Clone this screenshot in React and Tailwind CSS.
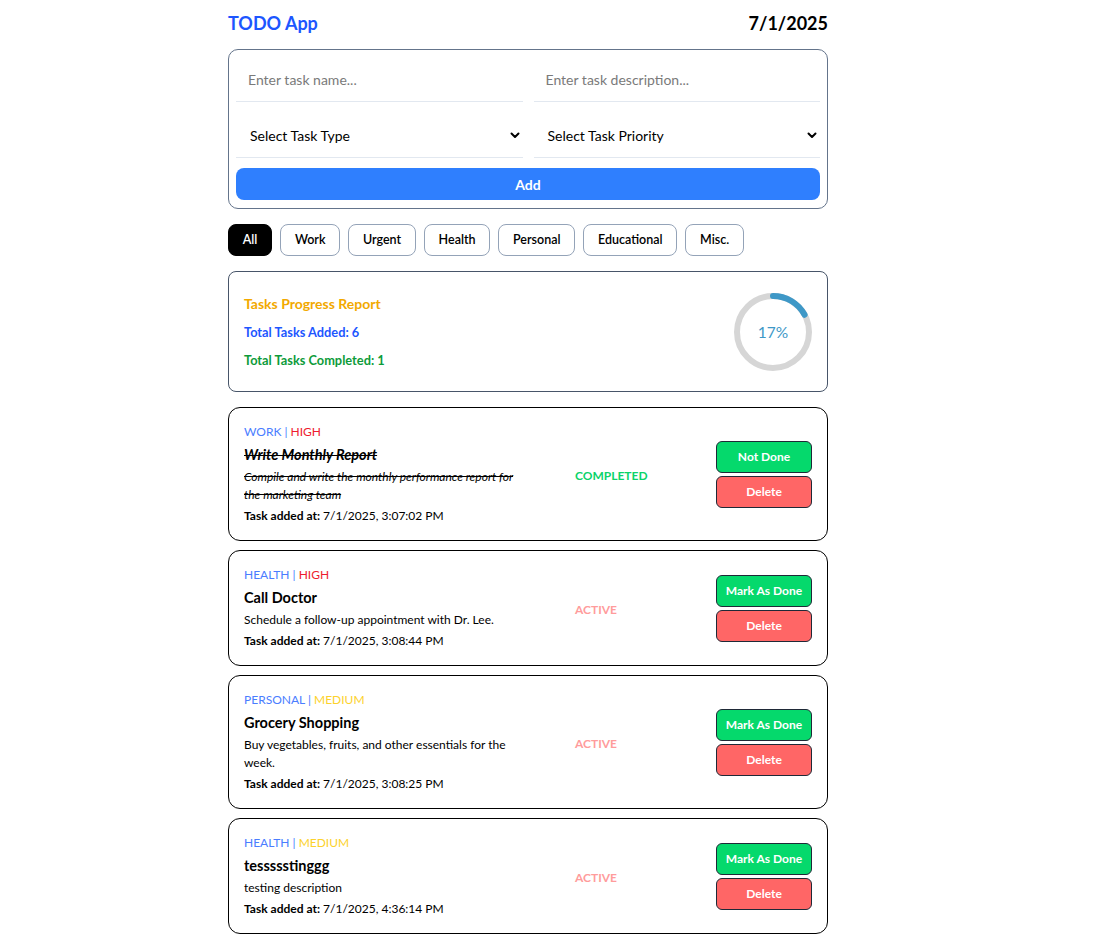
import { useState } from 'react';

const tasks = [
  {
    id: 1,
    type: 'WORK',
    priority: 'HIGH',
    title: 'Write Monthly Report',
    description: 'Compile and write the monthly performance report for the marketing team',
    addedAt: '7/1/2025, 3:07:02 PM',
    completed: true,
  },
  {
    id: 2,
    type: 'HEALTH',
    priority: 'HIGH',
    title: 'Call Doctor',
    description: 'Schedule a follow-up appointment with Dr. Lee.',
    addedAt: '7/1/2025, 3:08:44 PM',
    completed: false,
  },
  {
    id: 3,
    type: 'PERSONAL',
    priority: 'MEDIUM',
    title: 'Grocery Shopping',
    description: 'Buy vegetables, fruits, and other essentials for the week.',
    addedAt: '7/1/2025, 3:08:25 PM',
    completed: false,
  },
  {
    id: 4,
    type: 'HEALTH',
    priority: 'MEDIUM',
    title: 'tessssstinggg',
    description: 'testing description',
    addedAt: '7/1/2025, 4:36:14 PM',
    completed: false,
  },
];

const filters = ['All', 'Work', 'Urgent', 'Health', 'Personal', 'Educational', 'Misc.'];

const ProgressCircle = ({ percent }) => {
  const r = 36;
  const c = 2 * Math.PI * r;
  return (
    <svg width="80" height="80" viewBox="0 0 80 80">
      <circle cx="40" cy="40" r={r} fill="none" stroke="#d6d6d6" strokeWidth="6" />
      <circle
        cx="40"
        cy="40"
        r={r}
        fill="none"
        stroke="#3e98c7"
        strokeWidth="6"
        strokeLinecap="round"
        strokeDasharray={c}
        strokeDashoffset={c * (1 - percent / 100)}
        transform="rotate(-90 40 40)"
      />
      <text x="40" y="45.5" textAnchor="middle" fontSize="15.5" fill="#3e98c7">
        {percent}%
      </text>
    </svg>
  );
};

const TaskCard = ({ task }) => {
  const priorityColor = task.priority === 'HIGH' ? 'text-[#ee1c2e]' : 'text-[#fcd22c]';
  return (
    <div className="border border-black rounded-xl pl-[15px] pr-[15px] pt-[14px] pb-[14px] flex items-center">
      <div className="w-[300px] flex flex-col">
        <div className="text-[12px] leading-[20px]">
          <span className="text-[#4a7dff]">{task.type} | </span>
          <span className={priorityColor}>{task.priority}</span>
        </div>
        <div className={`text-[14.5px] font-bold leading-[24px] mt-[1px] ${task.completed ? 'line-through italic' : ''}`}>
          {task.title}
        </div>
        <div className={`w-[285px] text-[12px] leading-[18px] mt-[1px] ${task.completed ? 'line-through italic' : ''}`}>
          {task.description}
        </div>
        <div className="text-[12px] leading-[20px] mt-[2px]">
          <span className="font-bold">Task added at:</span> {task.addedAt}
        </div>
      </div>
      <div className="flex-1 pl-[31px]">
        <span className={`text-[12px] font-bold ${task.completed ? 'text-[#0bd36a]' : 'text-[#ff9c9c]'}`}>
          {task.completed ? 'COMPLETED' : 'ACTIVE'}
        </span>
      </div>
      <div className="flex flex-col gap-[3px] w-[96px]">
        <button className="h-[32px] rounded-md border border-[#1f2937] bg-[#05d96c] text-white text-[12px] font-bold">
          {task.completed ? 'Not Done' : 'Mark As Done'}
        </button>
        <button className="h-[32px] rounded-md border border-[#1f2937] bg-[#ff6666] text-white text-[12px] font-bold">
          Delete
        </button>
      </div>
    </div>
  );
};

export default function App() {
  const [active, setActive] = useState('All');

  return (
    <div className="min-h-screen bg-white text-black font-['Lato','Noto_Sans',sans-serif]">
      <div className="w-[600px] ml-[228px] pt-[10px] pb-[20px]">
        <div className="flex items-center justify-between h-[26px]">
          <h1 className="text-[18px] font-bold text-[#1d56ff]">TODO App</h1>
          <span className="text-[18px] font-bold">7/1/2025</span>
        </div>

        <div className="mt-[13px] border border-[#64748b] rounded-[10px] px-[7px] pt-[7px] pb-[8px]">
          <div className="grid grid-cols-2 gap-x-[11px]">
            <input
              placeholder="Enter task name..."
              className="h-[45px] px-[12px] text-[14px] border-b border-[#e2e8f0] outline-none placeholder:text-[#7a7a7a]"
            />
            <input
              placeholder="Enter task description..."
              className="h-[45px] px-[12px] text-[14px] border-b border-[#e2e8f0] outline-none placeholder:text-[#7a7a7a]"
            />
            <div className="mt-[11px] h-[45px] flex items-center justify-between pl-[14px] pr-[2px] border-b border-[#e2e8f0] text-[14px]">
              <span>Select Task Type</span>
              <svg width="12" height="12" viewBox="0 0 24 24" fill="none" stroke="black" strokeWidth="4" strokeLinecap="round" strokeLinejoin="round">
                <path d="M5 9l7 7 7-7" />
              </svg>
            </div>
            <div className="mt-[11px] h-[45px] flex items-center justify-between pl-[14px] pr-[2px] border-b border-[#e2e8f0] text-[14px]">
              <span>Select Task Priority</span>
              <svg width="12" height="12" viewBox="0 0 24 24" fill="none" stroke="black" strokeWidth="4" strokeLinecap="round" strokeLinejoin="round">
                <path d="M5 9l7 7 7-7" />
              </svg>
            </div>
          </div>
          <button className="mt-[10px] w-full h-[32px] rounded-lg bg-[#2f7ffe] text-white text-[14px] font-bold">
            Add
          </button>
        </div>

        <div className="mt-[15px] flex gap-[8px]">
          {filters.map((f) => (
            <button
              key={f}
              onClick={() => setActive(f)}
              className={`h-[32px] px-[13.75px] rounded-lg border text-[12.5px] font-semibold ${
                active === f ? 'bg-black text-white border-black' : 'bg-white text-black border-[#94a3b8]'
              }`}
            >
              {f}
            </button>
          ))}
        </div>

        <div className="mt-[15px] border border-[#475569] rounded-lg h-[121px] pl-[15px] pr-[14px] flex items-center justify-between">
          <div className="flex flex-col gap-[9px] text-[12.8px] font-bold">
            <span className="text-[14px] text-[#f2a900]">Tasks Progress Report</span>
            <span className="text-[#1d56ff]">Total Tasks Added: 6</span>
            <span className="text-[#0d9b3a]">Total Tasks Completed: 1</span>
          </div>
          <ProgressCircle percent={17} />
        </div>

        <div className="mt-[15px] flex flex-col gap-[9px]">
          {tasks.map((t) => (
            <TaskCard key={t.id} task={t} />
          ))}
        </div>
      </div>
    </div>
  );
}
